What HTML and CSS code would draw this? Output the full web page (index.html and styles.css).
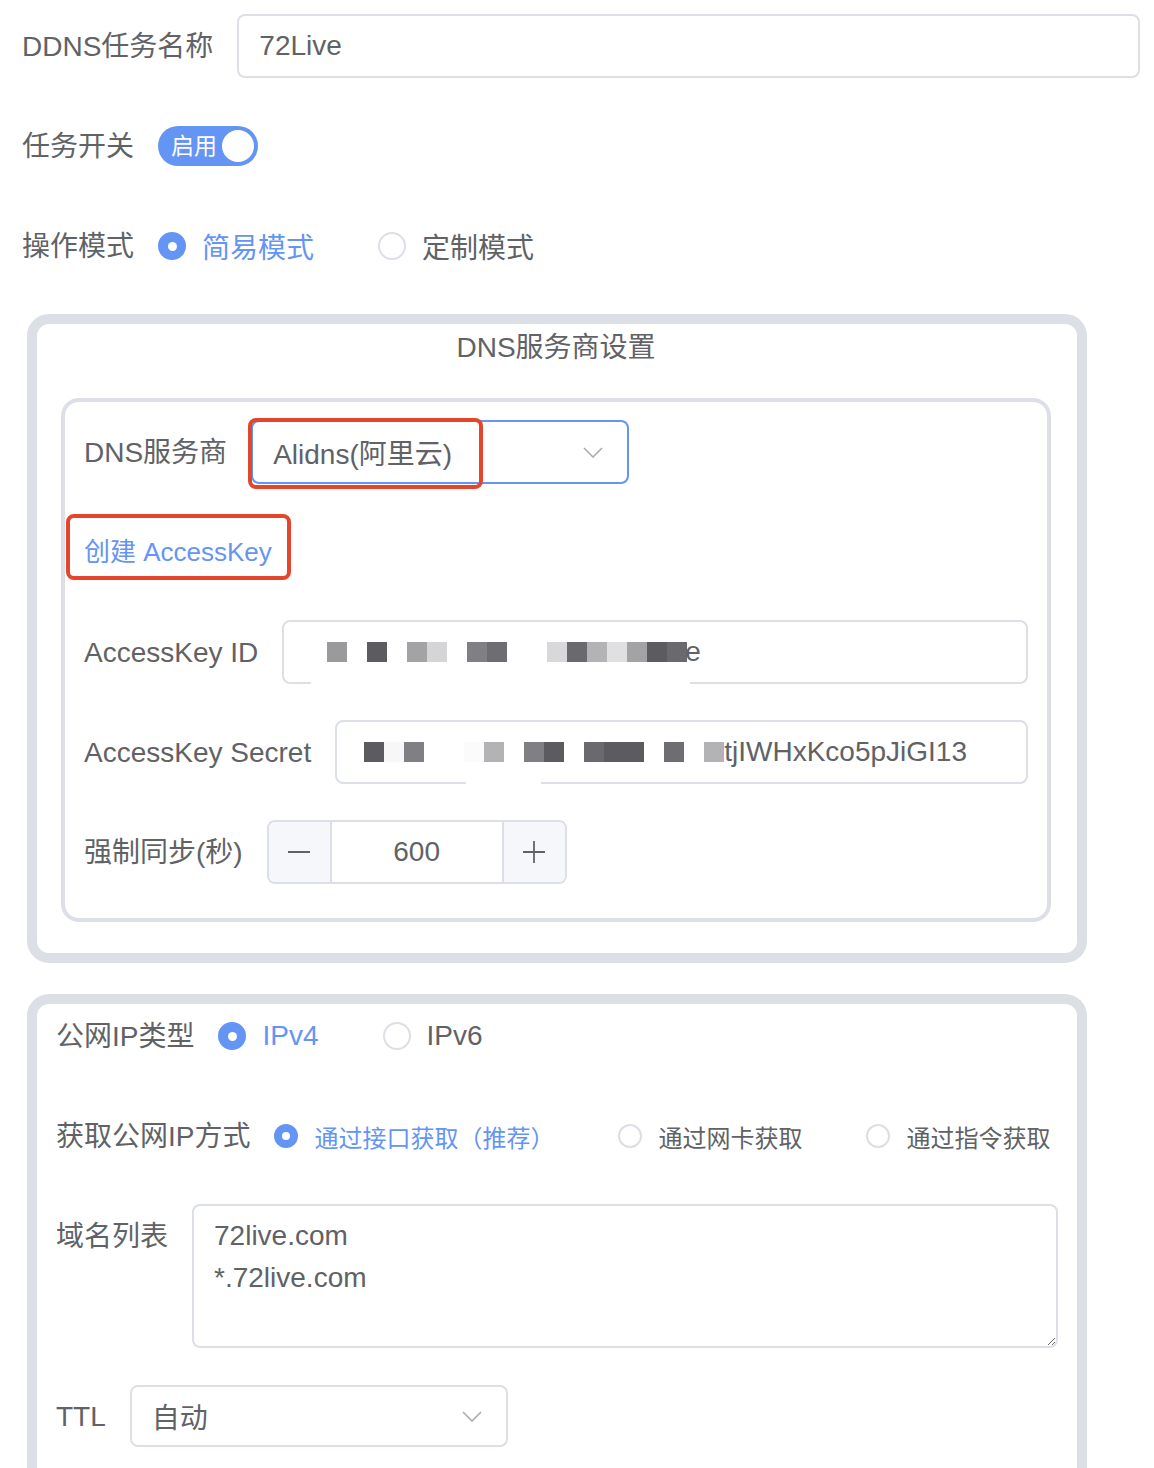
FILE: index.html
```html
<!DOCTYPE html>
<html lang="zh-CN">
<head>
<meta charset="utf-8">
<title>DDNS</title>
<link rel="stylesheet" href="styles.css">
</head>
<body>
<div class="page">
  <div class="top">
    <div class="item">
      <div class="label">DDNS任务名称</div>
      <div class="input grow"><span class="val">72Live</span></div>
    </div>
    <div class="item">
      <div class="label">任务开关</div>
      <div class="switch"><span class="switch-text">启用</span><span class="knob"></span></div>
    </div>
    <div class="item">
      <div class="label">操作模式</div>
      <div class="radio checked"><span class="dot"></span><span class="rtext">简易模式</span></div>
      <div class="radio"><span class="dot"></span><span class="rtext">定制模式</span></div>
    </div>
  </div>

  <div class="box box1">
    <div class="box-title">DNS服务商设置</div>
    <div class="inner">
      <div class="item">
        <div class="label">DNS服务商</div>
        <div class="select active">
          <span class="val">Alidns(阿里云)</span>
          <svg class="chev" width="20" height="11" viewBox="0 0 20 11"><polyline points="1,1 10,10 19,1" fill="none" stroke="#a8abb2" stroke-width="1.6"/></svg>
          <span class="mark mark-select"></span>
        </div>
      </div>
      <div class="item">
        <div class="link">创建 AccessKey<span class="mark mark-link"></span></div>
      </div>
      <div class="item">
        <div class="label">AccessKey ID</div>
        <div class="input grow blurred">
          <span class="cells first">
            <i class="c s3"></i><i class="c"></i><i class="c s9"></i><i class="c"></i><i class="c s2"></i><i class="c s6"></i><i class="c"></i><i class="c s5"></i><i class="c s4"></i><i class="c"></i><i class="c"></i><i class="c s7"></i><i class="c s8"></i><i class="c s13"></i><i class="c s10"></i><i class="c s2"></i><i class="c s9"></i><i class="c s8"></i>
          </span><span class="val tight">e</span>
          <span class="gap gap-id"></span>
        </div>
      </div>
      <div class="item">
        <div class="label">AccessKey Secret</div>
        <div class="input grow blurred">
          <span class="cells first2">
            <i class="c s9"></i><i class="c s11"></i><i class="c s5"></i><i class="c"></i><i class="c"></i><i class="c s12"></i><i class="c s13"></i><i class="c"></i><i class="c s5"></i><i class="c s9"></i><i class="c"></i><i class="c s8"></i><i class="c s9"></i><i class="c s9"></i><i class="c"></i><i class="c s4"></i><i class="c"></i><i class="c s13"></i>
          </span><span class="val">tjIWHxKco5pJiGI13</span>
          <span class="gap gap-secret"></span>
        </div>
      </div>
      <div class="item last">
        <div class="label">强制同步(秒)</div>
        <div class="number">
          <span class="nbtn minus"><svg width="24" height="24" viewBox="0 0 24 24"><line x1="1" y1="12" x2="23" y2="12" stroke="#606266" stroke-width="1.8"/></svg></span>
          <span class="nval">600</span>
          <span class="nbtn plus"><svg width="24" height="24" viewBox="0 0 24 24"><line x1="1" y1="12" x2="23" y2="12" stroke="#606266" stroke-width="1.8"/><line x1="12" y1="1" x2="12" y2="23" stroke="#606266" stroke-width="1.8"/></svg></span>
        </div>
      </div>
    </div>
  </div>

  <div class="box box2">
    <div class="item">
      <div class="label">公网IP类型</div>
      <div class="radio checked"><span class="dot"></span><span class="rtext">IPv4</span></div>
      <div class="radio"><span class="dot"></span><span class="rtext">IPv6</span></div>
    </div>
    <div class="item">
      <div class="label">获取公网IP方式</div>
      <div class="radio small checked"><span class="dot"></span><span class="rtext">通过接口获取（推荐）</span></div>
      <div class="radio small"><span class="dot"></span><span class="rtext">通过网卡获取</span></div>
      <div class="radio small"><span class="dot"></span><span class="rtext">通过指令获取</span></div>
    </div>
    <div class="item top-align">
      <div class="label">域名列表</div>
      <textarea class="textarea" readonly>72live.com
*.72live.com</textarea>
    </div>
    <div class="item">
      <div class="label">TTL</div>
      <div class="select ttl">
        <span class="val">自动</span>
        <svg class="chev" width="20" height="11" viewBox="0 0 20 11"><polyline points="1,1 10,10 19,1" fill="none" stroke="#a8abb2" stroke-width="1.6"/></svg>
      </div>
    </div>
  </div>
</div>
</body>
</html>
```

FILE: styles.css
```css
* { box-sizing: border-box; }
html, body { margin: 0; padding: 0; background: #fff; }
body {
  font-family: "Liberation Sans", "Noto Sans CJK SC", sans-serif;
  color: #606266;
  font-size: 28px;
}
.page { padding-top: 14px; width: 1154px; }
.top { padding: 0 14px 0 22px; }

.item {
  display: flex;
  align-items: center;
  min-height: 64px;
  margin-bottom: 36px;
}
.item.last { margin-bottom: 0; }
.item.top-align { align-items: flex-start; }

.label {
  font-size: 28px;
  line-height: 62px;
  padding-top: 2px;
  padding-right: 24px;
  white-space: nowrap;
  color: #606266;
}

.input {
  position: relative;
  height: 64px;
  border: 2px solid #dcdfe6;
  border-radius: 8px;
  padding-left: 20px;
  display: flex;
  align-items: center;
  background: #fff;
}
.grow { flex: 1; }
.val { font-size: 28px; color: #606266; white-space: nowrap; }

.switch {
  position: relative;
  width: 100px;
  height: 40px;
  border-radius: 20px;
  background: #6495f5;
  display: flex;
  align-items: center;
  padding-left: 13px;
}
.switch-text { color: #fff; font-size: 23px; line-height: 40px; }
.knob {
  position: absolute;
  right: 4px;
  top: 4px;
  width: 32px;
  height: 32px;
  border-radius: 50%;
  background: #fff;
}

.radio {
  display: flex;
  align-items: center;
  margin-right: 64px;
}
.radio .dot {
  width: 28px;
  height: 28px;
  border-radius: 50%;
  border: 2px solid #dcdfe6;
  background: #fff;
  position: relative;
  flex: none;
}
.radio.checked .dot { background: #6495f5; border-color: #6495f5; }
.radio.checked .dot::after {
  content: "";
  position: absolute;
  left: 50%;
  top: 50%;
  width: 9px;
  height: 9px;
  margin: -4.5px 0 0 -4.5px;
  border-radius: 50%;
  background: #fff;
}
.rtext { margin-left: 16px; font-size: 28px; color: #606266; white-space: nowrap; }
.radio.checked .rtext { color: #6495f5; }
.radio.small .dot { width: 24px; height: 24px; }
.radio.small.checked .dot::after { width: 8px; height: 8px; margin: -4px 0 0 -4px; }
.radio.small .rtext { font-size: 24px; }

.box {
  margin-left: 27px;
  width: 1060px;
  border: 10px solid #dcdfe6;
  border-radius: 22px;
}
.box1 { padding: 0 26px 31px 24px; margin-bottom: 31px; }
.box2 { padding: 0 19px 0 19px; border-bottom: none; border-bottom-left-radius: 0; border-bottom-right-radius: 0; height: 480px; }
.box-title {
  text-align: center;
  line-height: 44px;
  padding-top: 2px;
  font-size: 28px;
  margin-bottom: 28px;
}
.inner {
  border: 4px solid #dcdfe6;
  border-radius: 18px;
  padding: 18px 19px 34px 19px;
}

.select {
  position: relative;
  width: 378px;
  height: 64px;
  border: 2px solid #dcdfe6;
  border-radius: 8px;
  display: flex;
  align-items: center;
  justify-content: space-between;
  padding: 0 24px 0 20px;
  background: #fff;
}
.select.active { border-color: #6495f5; }
.select.ttl { height: 62px; }
.chev { display: block; }

.mark {
  position: absolute;
  border: 4px solid #e5452a;
  border-radius: 8px;
  pointer-events: none;
}
.mark-select { left: -5px; top: -4px; width: 235px; height: 71px; }
.link {
  position: relative;
  font-size: 26px;
  color: #6495f5;
  line-height: 64px;
  white-space: nowrap;
}
.mark-link { left: -18px; top: -6px; width: 225px; height: 66px; }

.cells { display: flex; align-items: center; height: 20px; }
.cells.first { margin-left: 23px; }
.cells.first2 { margin-left: 7px; }
.c { display: block; width: 20px; height: 20px; }
.s1 { background: #a0a0a2; }
.s2 { background: #a3a3a5; }
.s3 { background: #9a9a9c; }
.s4 { background: #6e6e72; }
.s5 { background: #808084; }
.s6 { background: #d5d5d7; }
.s7 { background: #d8d8da; }
.s8 { background: #6a6a6e; }
.s9 { background: #5c5c60; }
.s10 { background: #e0e0e2; }
.s11 { background: #f7f7f7; }
.s12 { background: #fbfbfb; }
.s13 { background: #b3b3b5; }
.tight { margin-left: -2px; }
.gap {
  position: absolute;
  bottom: -2px;
  height: 3px;
  background: #fff;
}
.gap-id { left: 27px; width: 379px; }
.gap-secret { left: 129px; width: 75px; }

.number {
  width: 300px;
  height: 64px;
  border: 2px solid #dcdfe6;
  border-radius: 8px;
  display: flex;
  overflow: hidden;
}
.nbtn {
  width: 63px;
  flex: none;
  background: #f5f7fa;
  display: flex;
  align-items: center;
  justify-content: center;
}
.minus { border-right: 2px solid #dcdfe6; }
.plus { border-left: 2px solid #dcdfe6; }
.nval {
  flex: 1;
  text-align: center;
  line-height: 60px;
  font-size: 28px;
}

.textarea {
  flex: 1;
  height: 144px;
  border: 2px solid #dcdfe6;
  border-radius: 8px;
  padding: 9px 20px;
  font-family: "Liberation Sans", "Noto Sans CJK SC", sans-serif;
  font-size: 28px;
  line-height: 42px;
  color: #606266;
  resize: vertical;
  outline: none;
  margin: 0;
}
```
